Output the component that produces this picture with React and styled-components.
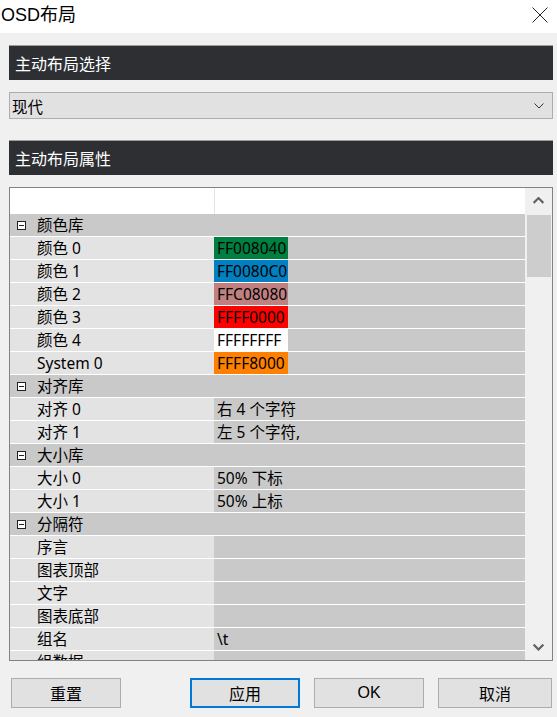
import * as React from 'react';
import styled, {createGlobalStyle} from 'styled-components';

const FONT = `"Liberation Sans", "Noto Sans CJK SC", sans-serif`;
const GRID_FONT = `"Noto Sans", "Noto Sans CJK SC", sans-serif`;

const GROUPS = [
  {
    name: '颜色库',
    items: [
      {label: '颜色 0', value: 'FF008040', swatch: '#008040'},
      {label: '颜色 1', value: 'FF0080C0', swatch: '#0080c0'},
      {label: '颜色 2', value: 'FFC08080', swatch: '#c08080'},
      {label: '颜色 3', value: 'FFFF0000', swatch: '#ff0000'},
      {label: '颜色 4', value: 'FFFFFFFF', swatch: '#ffffff'},
      {label: 'System 0', value: 'FFFF8000', swatch: '#ff8000'},
    ],
  },
  {
    name: '对齐库',
    items: [
      {label: '对齐 0', value: '右 4 个字符'},
      {label: '对齐 1', value: '左 5 个字符,'},
    ],
  },
  {
    name: '大小库',
    items: [
      {label: '大小 0', value: '50% 下标'},
      {label: '大小 1', value: '50% 上标'},
    ],
  },
  {
    name: '分隔符',
    items: [
      {label: '序言', value: ''},
      {label: '图表顶部', value: ''},
      {label: '文字', value: ''},
      {label: '图表底部', value: ''},
      {label: '组名', value: '\\t'},
      {label: '组数据', value: ''},
    ],
  },
];

const GlobalStyle = createGlobalStyle`
  html, body {
    margin: 0;
    padding: 0;
    background: #f0f0f0;
  }
  * {
    box-sizing: border-box;
  }
`;

const Dialog = styled.div`
  width: 557px;
  height: 717px;
  display: flex;
  flex-direction: column;
  background: #f0f0f0;
  font-family: ${FONT};
  color: #000;
  overflow: hidden;
`;

const TitleBar = styled.div`
  height: 33px;
  flex: none;
  background: #fff;
  display: flex;
  align-items: center;
  justify-content: space-between;
  padding: 0 9px 0 1px;
`;

const TitleText = styled.div`
  font-size: 18px;
  line-height: 22px;
  margin-top: -4px;
`;

const CloseButton = styled.div`
  width: 16px;
  height: 16px;
  margin-top: -4px;
  display: flex;
`;

const Body = styled.div`
  flex: 1;
  display: flex;
  flex-direction: column;
  padding: 12px 4px 0 9px;
`;

const SectionHeader = styled.div`
  height: 35px;
  flex: none;
  background: #2e2f33;
  border-top: 1px solid #9c9c9c;
  color: #fff;
  font-size: 16px;
  display: flex;
  align-items: center;
  padding-left: 6px;
  margin-bottom: ${({$gap}) => $gap}px;
`;

const Select = styled.div`
  height: 27px;
  flex: none;
  border: 1px solid #adadad;
  background: #e1e1e1;
  display: flex;
  align-items: center;
  justify-content: space-between;
  padding: 0 8px 0 2px;
  font-size: 15.5px;
  margin-bottom: 21px;
`;

const Grid = styled.div`
  height: 474px;
  flex: none;
  border: 1px solid #828282;
  display: flex;
  background: #fff;
`;

const GridBody = styled.div`
  flex: 1;
  overflow: hidden;
  display: flex;
  flex-direction: column;
`;

const HeaderRow = styled.div`
  height: 26px;
  flex: none;
  display: grid;
  grid-template-columns: 204px 1fr;
  background: #fff;
  & > div + div {
    border-left: 1px solid #e4e4e4;
  }
`;

const Row = styled.div`
  height: 23px;
  flex: none;
  display: grid;
  grid-template-columns: 204px 1fr;
  border-bottom: 1px solid #fff;
  font-family: ${GRID_FONT};
  font-size: 15.5px;
  line-height: 23px;
  background: #c9c9c9;
`;

const GroupCell = styled.div`
  grid-column: 1 / 3;
  display: flex;
  align-items: center;
  padding-left: 7px;
  white-space: nowrap;
`;

const Toggle = styled.span`
  width: 9px;
  height: 9px;
  border: 1px solid #222;
  display: flex;
  align-items: center;
  justify-content: center;
  margin-right: 11px;
  background: #fff;

  &::after {
    content: '';
    width: 5px;
    height: 1px;
    background: #222;
  }
`;

const LabelCell = styled.div`
  background: #e3e3e3;
  padding-left: 27px;
  white-space: nowrap;
  overflow: hidden;
`;

const ValueCell = styled.div`
  white-space: nowrap;
  overflow: hidden;
  display: flex;
`;

const ValueText = styled.span`
  display: block;
  padding-left: 3px;
  width: ${({$swatch}) => ($swatch ? '74px' : 'auto')};
  background: ${({$swatch}) => $swatch || 'transparent'};
`;

const ScrollBar = styled.div`
  width: 27px;
  flex: none;
  background: #f0f0f0;
  display: flex;
  flex-direction: column;
`;

const ScrollArrow = styled.div`
  height: 25px;
  flex: none;
  display: flex;
  align-items: center;
  justify-content: center;
`;

const ScrollTrack = styled.div`
  flex: 1;
  padding: 2px 1px 0 2px;
`;

const ScrollThumb = styled.div`
  height: 62px;
  background: #cdcdcd;
`;

const Footer = styled.div`
  display: flex;
  padding: 17px 0 0 2px;
`;

const Button = styled.div`
  width: ${({$width}) => $width || 110}px;
  height: 30px;
  margin-left: ${({$offset}) => $offset || 0}px;
  background: #e1e1e1;
  border: ${({$focused}) =>
    $focused ? '2px solid #0078d7' : '1px solid #adadad'};
  display: flex;
  align-items: center;
  justify-content: center;
  font-size: 16px;
`;

const Chevron = ({up, color = '#333', width = 1, size = 10}) => (
  <svg width={size} height={size / 2 + 1} viewBox="0 0 10 6">
    <path
      d={up ? 'M0.5 5.5 L5 1 L9.5 5.5' : 'M0.5 0.5 L5 5 L9.5 0.5'}
      fill="none"
      stroke={color}
      strokeWidth={width}
    />
  </svg>
);

const App = () => {
  return (
    <Dialog>
      <GlobalStyle />
      <TitleBar>
        <TitleText>OSD布局</TitleText>
        <CloseButton>
          <svg width="16" height="16" viewBox="0 0 16 16">
            <path d="M0.5 0.5 L15.5 15.5 M15.5 0.5 L0.5 15.5" stroke="#222" strokeWidth="1" />
          </svg>
        </CloseButton>
      </TitleBar>
      <Body>
        <SectionHeader $gap={12}>主动布局选择</SectionHeader>
        <Select>
          <span>现代</span>
          <Chevron />
        </Select>
        <SectionHeader $gap={12}>主动布局属性</SectionHeader>
        <Grid>
          <GridBody>
            <HeaderRow>
              <div />
              <div />
            </HeaderRow>
            {GROUPS.map((group) => (
              <React.Fragment key={group.name}>
                <Row>
                  <GroupCell>
                    <Toggle />
                    {group.name}
                  </GroupCell>
                </Row>
                {group.items.map((item) => (
                  <Row key={item.label}>
                    <LabelCell>{item.label}</LabelCell>
                    <ValueCell>
                      <ValueText $swatch={item.swatch}>{item.value}</ValueText>
                    </ValueCell>
                  </Row>
                ))}
              </React.Fragment>
            ))}
          </GridBody>
          <ScrollBar>
            <ScrollArrow>
              <Chevron up color="#606060" width={2} size={11} />
            </ScrollArrow>
            <ScrollTrack>
              <ScrollThumb />
            </ScrollTrack>
            <ScrollArrow>
              <Chevron color="#606060" width={2} size={11} />
            </ScrollArrow>
          </ScrollBar>
        </Grid>
        <Footer>
          <Button>重置</Button>
          <Button $offset={69} $focused>
            应用
          </Button>
          <Button $offset={14}>OK</Button>
          <Button $offset={14} $width={114}>
            取消
          </Button>
        </Footer>
      </Body>
    </Dialog>
  );
};

export default App;
